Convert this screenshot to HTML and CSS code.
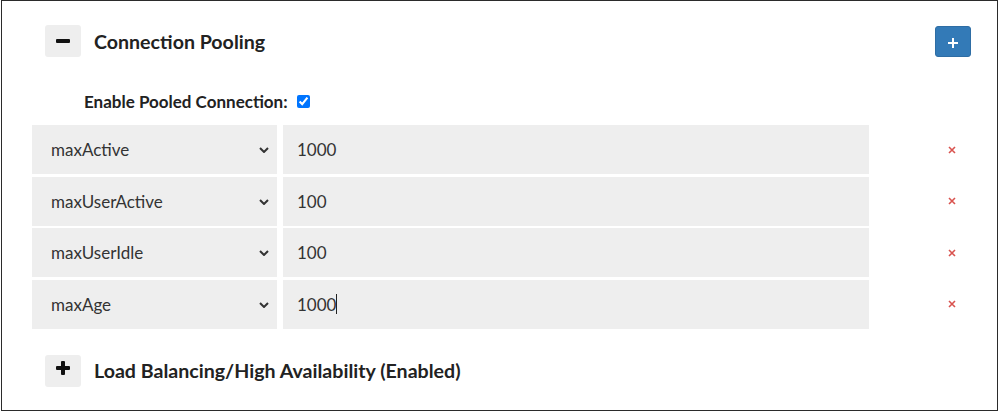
FILE: index.html
```html
<!DOCTYPE html>
<html lang="en">
<head>
  <meta charset="UTF-8" />
  <title>Connection Pooling</title>
  <link rel="stylesheet" href="styles.css">
</head>
<body>
  <div class="panel">

    <div class="section-head">
      <button class="toggle-btn">
        <svg width="14" height="14" viewBox="0 0 14 14"><rect x="0" y="5" width="14" height="4" rx="1" fill="#111"/></svg>
      </button>
      <h2 class="section-title">Connection Pooling</h2>
      <button class="add-btn">
        <svg width="10" height="10" viewBox="0 0 10 10"><path d="M5 0V10M0 5H10" stroke="#fff" stroke-width="2"/></svg>
      </button>
    </div>

    <label class="enable-row">
      Enable Pooled Connection:
      <input type="checkbox" class="enable-check" checked>
    </label>

    <div class="prop-list">
      <div class="prop-row">
        <div class="prop-name">maxActive
          <svg class="chev" width="10" height="6" viewBox="0 0 10 6"><path d="M1 1L5 5L9 1" fill="none" stroke="#333" stroke-width="2"/></svg>
        </div>
        <input class="prop-value" type="text" value="1000">
        <span class="prop-del"><svg width="8" height="8" viewBox="0 0 8 8"><path d="M1 1L7 7M7 1L1 7" stroke="#d9534f" stroke-width="1.6"/></svg></span>
      </div>
      <div class="prop-row">
        <div class="prop-name">maxUserActive
          <svg class="chev" width="10" height="6" viewBox="0 0 10 6"><path d="M1 1L5 5L9 1" fill="none" stroke="#333" stroke-width="2"/></svg>
        </div>
        <input class="prop-value" type="text" value="100">
        <span class="prop-del"><svg width="8" height="8" viewBox="0 0 8 8"><path d="M1 1L7 7M7 1L1 7" stroke="#d9534f" stroke-width="1.6"/></svg></span>
      </div>
      <div class="prop-row">
        <div class="prop-name">maxUserIdle
          <svg class="chev" width="10" height="6" viewBox="0 0 10 6"><path d="M1 1L5 5L9 1" fill="none" stroke="#333" stroke-width="2"/></svg>
        </div>
        <input class="prop-value" type="text" value="100">
        <span class="prop-del"><svg width="8" height="8" viewBox="0 0 8 8"><path d="M1 1L7 7M7 1L1 7" stroke="#d9534f" stroke-width="1.6"/></svg></span>
      </div>
      <div class="prop-row">
        <div class="prop-name">maxAge
          <svg class="chev" width="10" height="6" viewBox="0 0 10 6"><path d="M1 1L5 5L9 1" fill="none" stroke="#333" stroke-width="2"/></svg>
        </div>
        <div class="prop-value">1000<span class="caret"></span></div>
        <span class="prop-del"><svg width="8" height="8" viewBox="0 0 8 8"><path d="M1 1L7 7M7 1L1 7" stroke="#d9534f" stroke-width="1.6"/></svg></span>
      </div>
    </div>

    <div class="section-head section-foot">
      <button class="toggle-btn">
        <svg class="plus-ico" width="14" height="14" viewBox="0 0 14 14"><rect x="0" y="5" width="14" height="4" rx="1" fill="#111"/><rect x="5" y="0" width="4" height="14" rx="1" fill="#111"/></svg>
      </button>
      <h2 class="section-title">Load Balancing/High Availability (Enabled)</h2>
    </div>

  </div>
</body>
</html>
```

FILE: styles.css
```css
* { margin: 0; padding: 0; box-sizing: border-box; }
html, body {
  width: 100%;
  height: 100%;
  overflow: hidden;
  background: white;
  font-family: Lato, "Open Sans", sans-serif;
  color: #333;
}

.panel {
  margin-left: 1px;
  width: 997px;
  height: 411px;
  border: 1px solid #2b2b2b;
  padding-top: 24px;
}

.section-head {
  display: flex;
  align-items: center;
  padding-left: 43px;
  padding-right: 26px;
  height: 32px;
}

.toggle-btn {
  width: 36px;
  height: 32px;
  background: #eee;
  border: none;
  border-radius: 3px;
  display: flex;
  justify-content: center;
  align-items: center;
  cursor: pointer;
}

.plus-ico { margin-bottom: 6px; }

.section-title {
  margin-left: 13px;
  font-size: 19.6px;
  font-weight: bold;
  color: #222;
  flex: 1;
}

.add-btn {
  width: 36px;
  height: 31px;
  background: #337ab7;
  border: 1px solid #2e6da4;
  border-radius: 3px;
  display: flex;
  justify-content: center;
  align-items: center;
  padding-top: 4px;
  cursor: pointer;
}

.enable-row {
  display: flex;
  align-items: center;
  margin-top: 34px;
  padding-left: 82px;
  height: 20px;
  font-size: 17px;
  font-weight: bold;
  color: #222;
}

.enable-check {
  width: 13px;
  height: 13px;
  margin-left: 9px;
  margin-top: 1px;
}

.prop-list {
  margin-top: 14px;
  padding-left: 30px;
  display: flex;
  flex-direction: column;
  gap: 2.5px;
}

.prop-row {
  display: flex;
  height: 49px;
  gap: 6px;
}

.prop-name {
  position: relative;
  width: 245px;
  background: #eee;
  display: flex;
  align-items: center;
  padding-left: 19px;
  font-size: 17px;
  color: #333;
}

.chev {
  position: absolute;
  left: 227px;
  top: 22px;
}

.prop-value {
  width: 586px;
  background: #eee;
  border: none;
  outline: none;
  padding-left: 14px;
  font-family: Lato, "Open Sans", sans-serif;
  font-size: 17px;
  color: #333;
  display: flex;
  align-items: center;
}

.caret {
  display: inline-block;
  width: 1px;
  height: 20px;
  background: #222;
}

.prop-del {
  margin-left: 73px;
  display: flex;
  align-items: center;
}

.section-foot {
  margin-top: 26px;
}
```
